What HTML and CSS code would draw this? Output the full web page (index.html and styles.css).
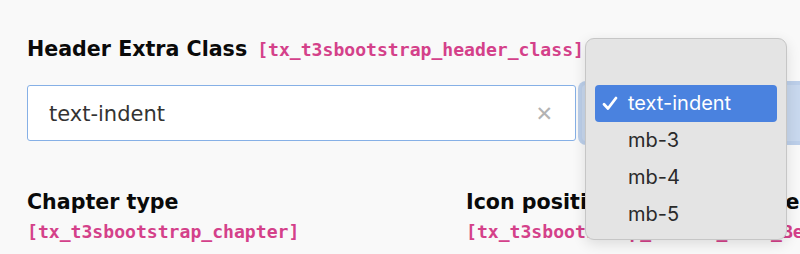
FILE: index.html
```html
<!DOCTYPE html>
<html lang="en">
<head>
<meta charset="utf-8">
<title>Header Extra Class</title>
<link rel="stylesheet" href="styles.css">
</head>
<body>
<div class="page">
  <div class="field">
    <div class="label-row">
      <span class="label">Header Extra Class</span>
      <code class="code">[tx_t3sbootstrap_header_class]</code>
    </div>
    <div class="input-row">
      <div class="input">
        <span class="value">text-indent</span>
        <span class="clear">&#x2715;</span>
      </div>
      <div class="btn-wrap">
        <div class="btn-light"></div>
        <div class="btn-dark"></div>
      </div>
    </div>
  </div>
  <div class="columns">
    <div class="col">
      <div class="label">Chapter type</div>
      <code class="code">[tx_t3sbootstrap_chapter]</code>
    </div>
    <div class="col">
      <div class="label">Icon position in a header area</div>
      <code class="code">[tx_t3sbootstrap_header_icon_Be]</code>
    </div>
  </div>
</div>
<div class="menu">
  <div class="item"></div>
  <div class="item selected"><svg class="check" width="16" height="15" viewBox="0 0 16 15"><path d="M2 8.2 L6 12.5 L14 2" fill="none" stroke="#fff" stroke-width="2.8" stroke-linecap="round" stroke-linejoin="round"/></svg>text-indent</div>
  <div class="item">mb-3</div>
  <div class="item">mb-4</div>
  <div class="item">mb-5</div>
</div>
</body>
</html>
```
FILE: styles.css
```css
html, body {
  margin: 0;
  padding: 0;
  background: #f9f9f9;
  overflow: hidden;
}
body {
  width: 800px;
  height: 254px;
  position: relative;
  font-family: "DejaVu Sans", Verdana, sans-serif;
  color: #111;
}
.page {
  padding: 36px 0 0 27px;
}
.label-row {
  display: flex;
  align-items: baseline;
  gap: 10px;
  white-space: nowrap;
}
.label {
  font-weight: bold;
  font-size: 20.6px;
  line-height: 26px;
  color: #0a0a0a;
  white-space: nowrap;
}
.code {
  font-family: "DejaVu Sans Mono", "Liberation Mono", monospace;
  font-size: 18.1px;
  font-weight: bold;
  line-height: 22px;
  color: #d4418a;
  white-space: nowrap;
}
.input-row {
  display: flex;
  margin-top: 23px;
  width: 800px;
}
.input {
  box-sizing: border-box;
  width: 549px;
  height: 56px;
  background: #fff;
  border: 1px solid #86b0e6;
  border-radius: 3px;
  display: flex;
  align-items: center;
  justify-content: space-between;
  padding: 2px 22px 0 21px;
}
.value {
  font-size: 21px;
  color: #333;
}
.clear {
  font-size: 21px;
  font-weight: bold;
  color: #b3b3b3;
}
.btn-wrap {
  flex: 1;
  display: flex;
  margin-left: 6px;
}
.btn-light {
  flex: 1;
  height: 56px;
  border-radius: 4px;
  background: #c8d8ee;
  box-shadow: 0 0 0 4px #bccfea;
}
.btn-dark {
  width: 12px;
  height: 54px;
  background: #1c1c1c;
  border-top: 2px solid #555;
}
.columns {
  display: grid;
  grid-template-columns: 439px 1fr;
  margin-top: 48px;
}
.col .code {
  display: block;
  margin-top: 6px;
}
.menu {
  position: absolute;
  left: 585px;
  top: 38px;
  width: 202px;
  height: 202px;
  box-sizing: border-box;
  padding: 9px 9px 0 9px;
  background: #e4e4e4;
  border: 1px solid #c6c6c6;
  border-radius: 9px;
  box-shadow: 0 4px 14px rgba(0,0,0,0.12);
  font-family: Inter, "Liberation Sans", sans-serif;
  font-size: 20px;
  color: #2a2a2a;
}
.item {
  height: 37px;
  line-height: 37px;
  padding-left: 33px;
  border-radius: 4px;
  position: relative;
}
.item.selected {
  background: #4a82df;
  color: #fff;
}
.check {
  position: absolute;
  left: 7px;
  top: 11px;
}
```
